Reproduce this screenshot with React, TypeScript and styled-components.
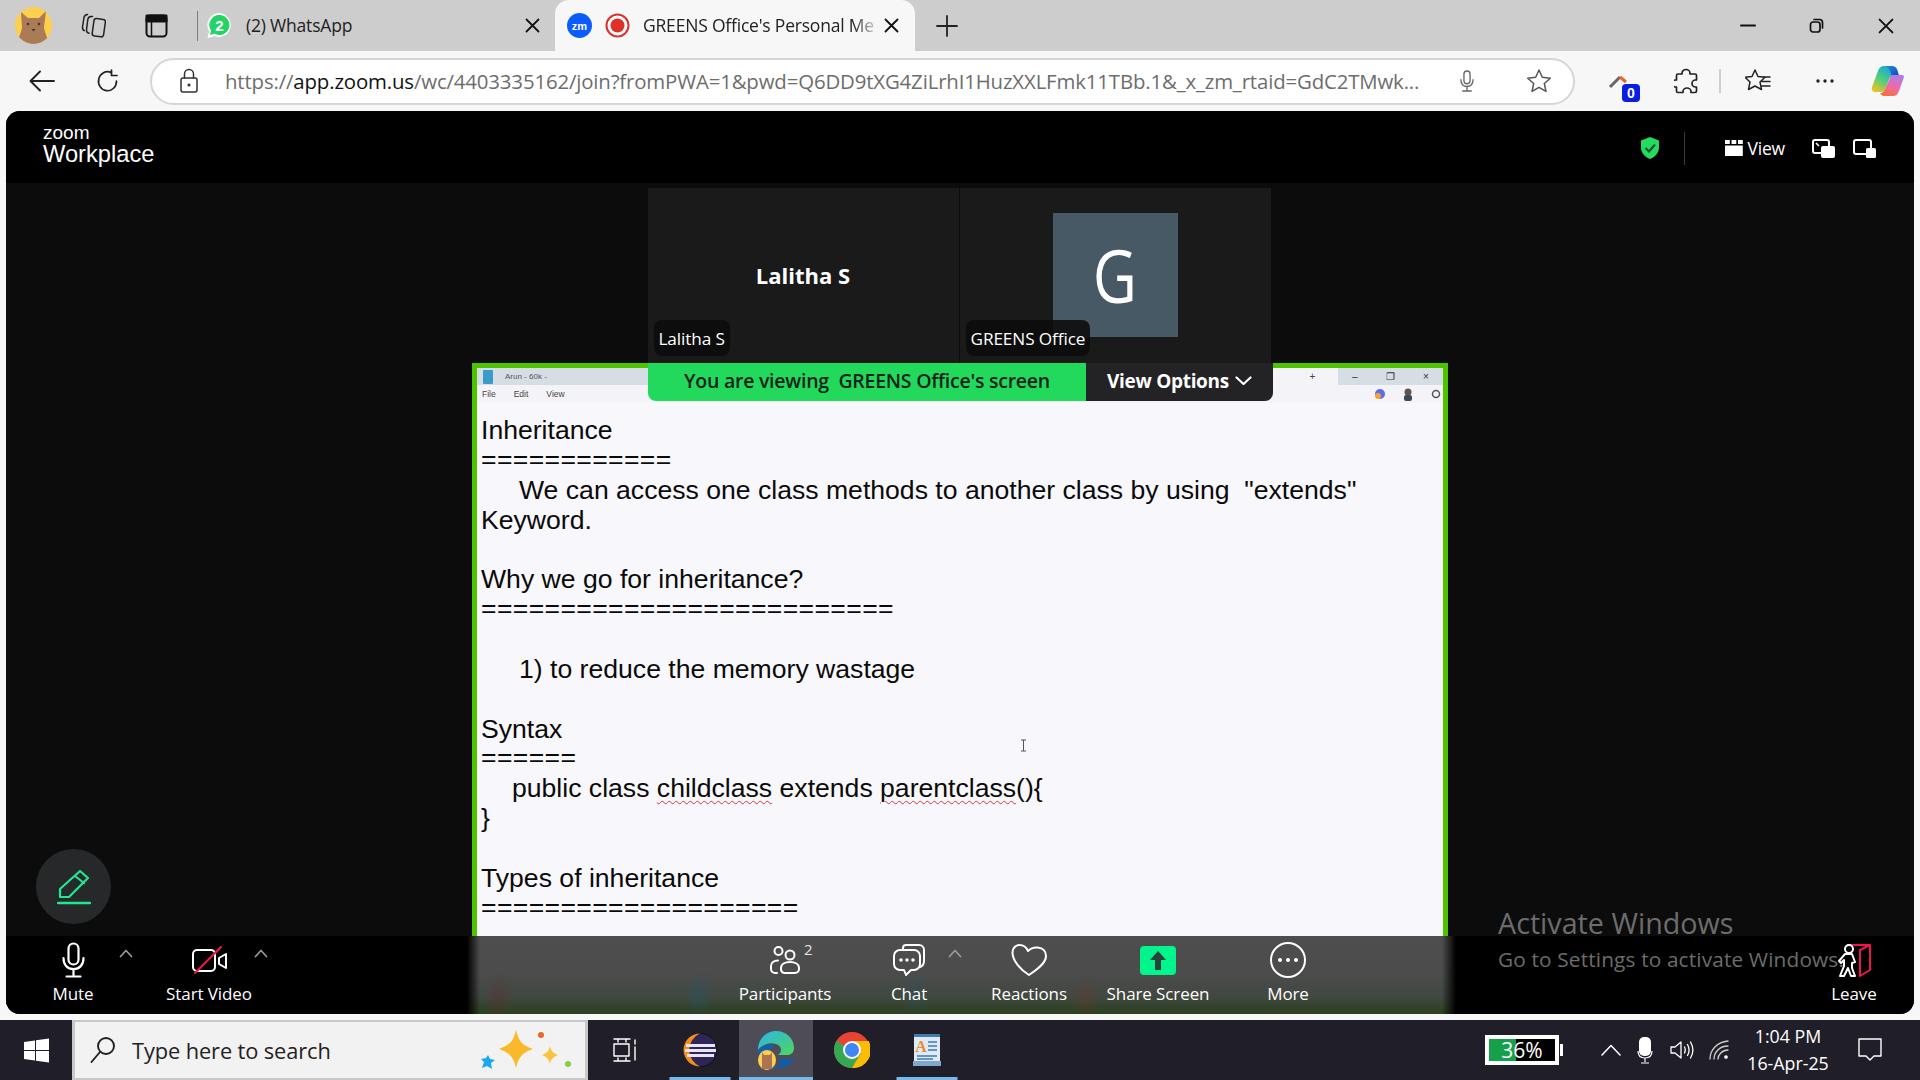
import React from 'react';
import styled, { createGlobalStyle } from 'styled-components';

const Global = createGlobalStyle`
  html, body { margin: 0; padding: 0; width: 1920px; height: 1080px; overflow: hidden; background: #f7f7f7; }
  * { box-sizing: border-box; }
`;
const UI = `"Open Sans", "Noto Sans", sans-serif`;

const Page = styled.div`display:flex;flex-direction:column;width:1920px;height:1080px;font-family:${UI};`;

/* ---------- browser chrome ---------- */
const TabBar = styled.div`display:flex;align-items:center;height:51px;background:#cdcdcd;padding-left:10px;flex:none;`;
const Slot = styled.div<{ $w: number; $ml?: number }>`
  flex:none;width:${p => p.$w}px;margin-left:${p => p.$ml ?? 0}px;display:flex;align-items:center;justify-content:center;
`;
const TabDivider = styled.div`width:1px;height:30px;background:#7d7d7d;margin-left:15px;flex:none;`;
const IdleTab = styled.div`display:flex;align-items:center;width:357px;height:51px;padding-left:8px;flex:none;`;
const TabTitle = styled.span<{ $w: number }>`
  width:${p => p.$w}px;font-size:17.5px;line-height:24px;padding-bottom:2px;color:#222;white-space:nowrap;overflow:hidden;flex:none;letter-spacing:-.2px;
`;
const ActiveTab = styled.div`
  display:flex;align-items:center;width:360px;height:51px;background:#f7f7f7;border-radius:14px 14px 0 0;padding-left:8px;flex:none;
`;
const FadeTitle = styled(TabTitle)`
  margin-left:4px;
  -webkit-mask-image:linear-gradient(90deg,#000 88%,transparent 100%);mask-image:linear-gradient(90deg,#000 88%,transparent 100%);
`;
const Grow = styled.div`flex:1;`;

const AddressRow = styled.div`display:flex;align-items:center;height:60px;background:#f7f7f7;padding-left:8px;flex:none;`;
const UrlBox = styled.div`
  display:flex;align-items:center;width:1425px;height:47px;margin-left:9px;background:#fff;border:2px solid #d6d6d6;border-radius:24px;flex:none;
`;
const Url = styled.div`width:1196px;font-size:20.4px;color:#6d6d6d;white-space:nowrap;flex:none;letter-spacing:-.15px;
  b{font-weight:400;color:#111;}
`;
const ToolSep = styled.div`width:2px;height:24px;background:#cfcfcf;margin:0 0 0 2px;flex:none;`;

/* ---------- zoom window ---------- */
const ZoomWindow = styled.div`
  position:relative;display:flex;flex-direction:column;width:1908px;height:903px;margin:0 6px;background:#0c0c0c;border-radius:14px;overflow:hidden;flex:none;color:#fff;
`;
const Header = styled.header`display:flex;align-items:center;height:72px;background:#000;padding:2px 0 0 37px;flex:none;`;
const Brand = styled.div`display:flex;flex-direction:column;line-height:1;`;
const BrandZoom = styled.span`font-size:19px;font-family:"Liberation Sans",sans-serif;margin-top:-5px;line-height:16px;`;
const BrandName = styled.span`font-size:23.7px;font-family:"Liberation Sans",sans-serif;margin-top:2px;`;
const HeaderSep = styled.div`width:1px;height:33px;background:#3a3a3a;margin-left:19px;flex:none;`;
const ViewLabel = styled.span`font-size:17.5px;font-weight:500;margin-left:3px;letter-spacing:-.2px;`;
const ShieldWrap = styled.div`margin-left:1481px;display:flex;width:30px;justify-content:center;flex:none;`;

const Stage = styled.main`position:relative;display:flex;flex-direction:column;align-items:center;flex:1;min-height:0;`;
const TileRow = styled.div`display:flex;gap:1px;height:180px;padding-top:5px;margin-right:2px;flex:none;`;
const Tile = styled.div`position:relative;display:flex;align-items:center;justify-content:center;width:311px;background:#1a1a1a;`;
const CenterName = styled.span`font-size:22px;font-weight:700;margin-top:-1px;`;
const Avatar = styled.div`
  display:flex;align-items:center;justify-content:center;width:125px;height:124px;background:#465964;margin-top:-1px;
`;
const AvatarLetter = styled.span`font-size:74px;line-height:1;font-family:"Open Sans",sans-serif;font-weight:500;transform:scaleX(.82);`;
const NameTag = styled.div`
  position:absolute;left:6px;bottom:7px;height:36px;padding:0 5px;display:flex;align-items:center;background:rgba(12,12,12,.9);border-radius:8px;font-size:17.2px;letter-spacing:-.1px;
`;

const ShareFrame = styled.section`
  position:relative;width:976px;flex:1;min-height:0;border:5px solid #4cc500;border-bottom:0;background:#f8f7fb;color:#000;overflow:hidden;
`;
const MiniTabs = styled.div`display:flex;align-items:center;height:17px;background:#d4dee4;font:8px "Liberation Sans",sans-serif;color:#555;padding-left:6px;`;
const MiniName = styled.span`margin-left:12px;`;
const MiniSpacer = styled.div`flex:1;`;
const MiniRight = styled.div`display:flex;align-items:center;justify-content:space-around;width:100px;height:17px;background:#f4f4f8;font-size:10px;color:#444;`;
const MiniControls = styled.div`display:flex;justify-content:space-around;width:105px;font-size:10px;color:#333;`;
const MiniMenu = styled.div`display:flex;align-items:center;gap:18px;height:18px;padding:0 2px 0 5px;background:#f4f4f8;font:8.5px "Liberation Sans",sans-serif;color:#444;`;
const MiniIcons = styled.div`display:flex;align-items:center;gap:18px;margin-left:auto;`;
const NoteBody = styled.div`padding:13px 0 0 4px;font:26.6px/29.87px "Liberation Sans",sans-serif;white-space:pre;color:#0a0a0a;`;
const NoteLine = styled.div<{ $indent?: number }>`height:29.87px;padding-left:${p => p.$indent ?? 0}px;`;
const RuleLine = styled(NoteLine)`letter-spacing:.35px;line-height:27.87px;`;
const Misspelt = styled.span`text-decoration:underline wavy #d9343c 1px;text-underline-offset:3px;`;
const Cursor = styled.div`position:absolute;left:543px;top:371px;line-height:0;`;

const Banner = styled.div`position:absolute;top:180px;left:642px;display:flex;height:38px;border-radius:0 0 8px 8px;overflow:hidden;`;
const BannerInfo = styled.div`
  display:flex;align-items:center;justify-content:center;width:438px;padding-bottom:3px;background:#22d95c;color:#15231c;font-size:19.5px;font-weight:600;white-space:pre;letter-spacing:-.25px;
`;
const BannerOptions = styled.div`
  display:flex;align-items:center;justify-content:center;gap:6px;width:187px;padding-bottom:3px;background:#232326;color:#fff;font-size:19px;font-weight:700;letter-spacing:-.3px;
`;

const PenButton = styled.div`
  position:absolute;left:30px;bottom:90px;width:75px;height:75px;border-radius:50%;background:#26282a;display:flex;align-items:center;justify-content:center;
`;
const Watermark = styled.div`position:absolute;left:1492px;top:794px;color:#6c6c6c;pointer-events:none;font-family:"Open Sans",sans-serif;`;
const WatermarkTitle = styled.div`font-size:28.7px;line-height:36px;`;
const WatermarkSub = styled.div`font-size:20.8px;line-height:30px;margin-top:3px;letter-spacing:.15px;`;

const ToolBar = styled.nav`
  display:flex;height:78px;flex:none;padding-left:24px;
  background:
    linear-gradient(90deg,#000 0,#000 461px,transparent 474px,transparent 1436px,#000 1450px),
    radial-gradient(ellipse 14px 24px at 493px 62px,rgba(110,30,40,.28),transparent),
    radial-gradient(ellipse 14px 24px at 693px 60px,rgba(20,90,120,.32),transparent),
    radial-gradient(ellipse 14px 24px at 910px 60px,rgba(20,90,120,.25),transparent),
    radial-gradient(ellipse 14px 24px at 1080px 62px,rgba(120,50,30,.28),transparent),
    linear-gradient(180deg,#4e4e4e 0,#4c4c4c 45%,#414841 78%,#2b3f1e 100%);
`;
const ToolItem = styled.div<{ $w: number; $ml?: number }>`
  display:flex;flex-direction:column;align-items:center;width:${p => p.$w}px;margin-left:${p => p.$ml ?? 0}px;flex:none;
`;
const ToolIcon = styled.div`position:relative;display:flex;align-items:center;justify-content:center;height:46px;width:100%;padding-top:2px;`;
const ToolLabel = styled.span`font-size:17px;line-height:24px;white-space:nowrap;color:#fff;letter-spacing:-.1px;`;
const Caret = styled.div<{ $ml?: number }>`width:16px;height:34px;margin-left:${p => p.$ml ?? 0}px;display:flex;align-items:center;justify-content:center;flex:none;`;
const CountSup = styled.span`position:absolute;left:69px;top:3px;font-size:15px;color:#e6e6e6;`;

/* ---------- taskbar ---------- */
const Strip = styled.div`height:6px;flex:none;`;
const Taskbar = styled.footer`display:flex;align-items:center;height:60px;background:#201f29;flex:none;color:#fff;`;
const StartButton = styled.div`width:72px;height:60px;display:flex;align-items:center;justify-content:center;flex:none;`;
const SearchBox = styled.div`
  display:flex;align-items:center;width:516px;height:60px;background:#f2f2f2;border:3px solid #c9c9c9;border-bottom-width:2px;border-top-width:2px;padding:0 13px 0 15px;flex:none;
`;
const SearchText = styled.span`font-size:21.8px;color:#222;margin-left:16px;flex:1;letter-spacing:-.1px;`;
const TaskButton = styled.div<{ $w: number; $active?: boolean; $bar?: number }>`
  position:relative;display:flex;align-items:center;justify-content:center;flex:none;width:${p => p.$w}px;height:60px;
  background:${p => (p.$active ? '#4e4c56' : 'transparent')};
  &::after{content:'';position:absolute;bottom:0;left:50%;height:3px;transform:translateX(-50%);width:${p => p.$bar ?? 0}px;background:#76b9ed;}
`;
const TaskSpacer = styled.div`flex:1;`;
const Battery = styled.div`
  position:relative;display:flex;align-items:center;justify-content:center;width:74px;height:30px;border:4px solid #fff;font-size:21px;flex:none;
  background:linear-gradient(90deg,#16a04a 0 41%,#000 41%);
  &::after{content:'';position:absolute;right:-8px;top:5px;width:3px;height:12px;background:#fff;}
`;
const Clock = styled.div`display:flex;flex-direction:column;align-items:center;width:90px;margin-left:8px;font-size:17.8px;line-height:27px;flex:none;`;

/* ---------- icons ---------- */
const Cat = ({ s = 37 }: { s?: number }) => (
  <svg width={s} height={s} viewBox="0 0 37 37">
    <defs><clipPath id="catClip"><circle cx="18.500" cy="18.500" r="18.500" /></clipPath></defs>
    <circle cx="18.500" cy="18.500" r="18.500" fill="#fcd04d" />
    <path clipPath="url(#catClip)" d="M6 5l7 6h11l7-7-2 16c0 4 3 9 5 17H2c2-8 5-13 5-17z" fill="#ab7a56" />
    <circle cx="13" cy="17" r="1.300" fill="#4a3526" /><circle cx="24" cy="17" r="1.300" fill="#4a3526" />
    <path d="M16.500 22h4l-2 2.500z" fill="#4a3526" />
  </svg>
);
const Stroke = ({ w, h = w, vb, sw = 2, c = 'currentColor', children }: any) => (
  <svg width={w} height={h} viewBox={vb} fill="none" stroke={c} strokeWidth={sw} strokeLinecap="round" strokeLinejoin="round">{children}</svg>
);
const Close = ({ c = '#111', s = 15 }: any) => <Stroke w={s} vb="0 0 15 15" sw={1.8} c={c}><path d="M1.5 1.5l12 12M13.5 1.5l-12 12" /></Stroke>;
const Up = ({ c = '#9a9a9a' }: any) => <Stroke w={14} h={9} vb="0 0 14 9" sw={1.7} c={c}><path d="M1.5 7.5L7 1.500l5.500 6" /></Stroke>;
const MicGlyph = ({ c = '#fff', w = 23, h = 36 }: any) => (
  <Stroke w={w} h={h} vb="0 0 23 36" sw={2.2} c={c}><rect x="6.500" y="1.500" width="10" height="21" rx="5" /><path d="M1.500 16c0 7 4 11 10 11s10-4 10-11M11.500 27v7M4.500 34.500h14" /></Stroke>
);

const App = () => (
  <Page>
    <Global />
    <TabBar>
      <Slot $w={46}><Cat /></Slot>
      <Slot $w={74}>
        <Stroke w={25} h={25} vb="0 0 25 25" sw={1.5} c="#222">
          <rect x="12" y="6" width="11.500" height="17.500" rx="2.500" transform="rotate(8 18 15)" />
          <path d="M11.500 3.500H10c-2 .2-3 1.500-3.200 3L5.500 17c0 1.800 1 3 2.500 3.300M6.500 1.500c-2 .2-3.200 1.500-3.500 3L1.500 14c-.2 1.800.5 3 1.800 3.600" />
        </Stroke>
      </Slot>
      <Slot $w={52}>
        <Stroke w={23} h={24} vb="0 0 23 24" sw={2} c="#111"><rect x="1.500" y="1.500" width="20" height="21" rx="3.500" /><rect x="1.500" y="1.500" width="20" height="6" fill="#111" /><path d="M6.500 7v15" strokeWidth={1.500} /></Stroke>
      </Slot>
      <TabDivider />
      <IdleTab>
        <Slot $w={26}>
          <svg width="25" height="25" viewBox="0 0 25 25"><path d="M12.500 0a12 12 0 0 0-10.300 18.200L.5 25l7-1.800A12 12 0 1 0 12.500 0z" fill="#fff" /><path d="M12.500 2a10 10 0 0 0-8.500 15.500L3 22l4.700-1.200A10 10 0 1 0 12.500 2z" fill="#25d366" /><text x="12.500" y="18" fontSize="15" fontWeight="700" fill="#fff" textAnchor="middle" fontFamily="Liberation Sans">2</text></svg>
        </Slot>
        <Slot $w={14} />
        <TabTitle $w={270}>(2) WhatsApp</TabTitle>
        <Slot $w={32}><Close /></Slot>
      </IdleTab>
      <ActiveTab>
        <Slot $w={32}>
          <svg width="25" height="25" viewBox="0 0 25 25"><circle cx="12.500" cy="12.500" r="12.500" fill="#0b5cff" /><text x="12.500" y="16.500" fontSize="11" fontWeight="700" fill="#fff" textAnchor="middle" fontFamily="Liberation Sans">zm</text></svg>
        </Slot>
        <Slot $w={44}>
          <svg width="25" height="25" viewBox="0 0 25 25"><circle cx="12.500" cy="12.500" r="11" fill="#fff" stroke="#d9322c" strokeWidth="2" /><circle cx="12.500" cy="12.500" r="7" fill="#e0302a" /></svg>
        </Slot>
        <FadeTitle $w={238}>GREENS Office's Personal Me</FadeTitle>
        <Slot $w={20}><Close /></Slot>
      </ActiveTab>
      <Slot $w={64}>
        <Stroke w={22} vb="0 0 22 22" sw={1.8} c="#222"><path d="M11 1v20M1 11h20" /></Stroke>
      </Slot>
      <Grow />
      <Slot $w={69}><Stroke w={16} h={3} vb="0 0 16 3" sw={2} c="#111"><path d="M1 1.500h14" /></Stroke></Slot>
      <Slot $w={69}><Stroke w={15} vb="0 0 15 15" sw={1.7} c="#111"><rect x="1.500" y="4" width="9.500" height="10" rx="2.500" /><path d="M5 1.500h5.500a3 3 0 0 1 3 3V10" /></Stroke></Slot>
      <Slot $w={69}><Close s={16} /></Slot>
    </TabBar>

    <AddressRow>
      <Slot $w={67}><Stroke w={26} h={22} vb="0 0 26 22" sw={1.9} c="#222"><path d="M25 11H2M11 1.500L1.500 11l9.500 9.500" /></Stroke></Slot>
      <Slot $w={66}><Stroke w={24} vb="0 0 24 24" sw={1.7} c="#222"><path d="M20.500 12A9 9.500 0 1 1 15 3.500M15.500 1v5.500H21" /></Stroke></Slot>
      <UrlBox>
        <Slot $w={73}><Stroke w={20} h={26} vb="0 0 20 26" sw={1.5} c="#333"><rect x="2" y="10" width="16" height="14" rx="2" /><path d="M5.500 10V6a4.500 4.500 0 0 1 9 0v4" /><circle cx="10" cy="17" r=".8" /></Stroke></Slot>
        <Url>https://<b>app.zoom.us</b>/wc/4403335162/join?fromPWA=1&amp;pwd=Q6DD9tXG4ZiLrhI1HuzXXLFmk11TBb.1&amp;_x_zm_rtaid=GdC2TMwk...</Url>
        <Slot $w={32} $ml={30}><MicGlyph c="#666" w={14} h={22} /></Slot>
        <Slot $w={44} $ml={34}><Stroke w={26} h={26} vb="0 0 26 26" sw={1.5} c="#555"><path d="M13 2l3.300 7.300 8 .9-6 5.300 1.700 7.900-7-4-7 4 1.700-7.900-6-5.300 8-.9z" /></Stroke></Slot>
      </UrlBox>
      <Slot $w={68} $ml={12}>
        <svg width="38" height="42" viewBox="0 0 38 42"><path d="M8 27L18 17" fill="none" stroke="#666" strokeWidth="3" /><path d="M18 17l6 5" stroke="#e8642c" strokeWidth="3" /><rect x="20" y="24" width="18" height="18" rx="4" fill="#0a1ee0" /><text x="29" y="38" fontSize="14" fontWeight="700" fill="#fff" textAnchor="middle" fontFamily="Liberation Sans">0</text></svg>
      </Slot>
      <Slot $w={62}><Stroke w={24} h={27} vb="0 0 24 27" sw={1.7} c="#222"><path d="M8 6V5a4 3.500 0 0 1 8 0v1h5a1.500 1.500 0 0 1 1.500 1.500V12h-1a3.500 3.500 0 0 0 0 7h1v4a1.500 1.500 0 0 1-1.500 1.500h-4v-1a4 3.500 0 0 0-8 0v1H4A1.500 1.500 0 0 1 2.500 23v-4h-1a3.500 3.500 0 0 1 0-7h1V7.500A1.500 1.500 0 0 1 4 6z" /></Stroke></Slot>
      <ToolSep />
      <Slot $w={74}><Stroke w={26} h={26} vb="0 0 26 26" sw={1.5} c="#222"><path d="M10 2l3 6.500 7 .8-5 4.700 1.500 7.500L10 18l-6.500 3.500L5 14 0 9.300l7-.8zM18 9h7M17 13.500h8M17 18h8" /></Stroke></Slot>
      <Slot $w={60}><svg width="20" height="4" viewBox="0 0 20 4" fill="#222"><circle cx="3" cy="2" r="1.700" /><circle cx="10" cy="2" r="1.700" /><circle cx="17" cy="2" r="1.700" /></svg></Slot>
      <Slot $w={65}>
        <svg width="33" height="30" viewBox="0 0 33 30">
          <defs>
            <linearGradient id="cpL" x1="0.700" y1="0" x2="0.200" y2="1"><stop offset="0" stopColor="#22a7d8" /><stop offset=".5" stopColor="#4fd07a" /><stop offset="1" stopColor="#f5c21f" /></linearGradient>
            <linearGradient id="cpR" x1="0.800" y1="0" x2="0.300" y2="1"><stop offset="0" stopColor="#a77ff0" /><stop offset=".55" stopColor="#ef6aa8" /><stop offset="1" stopColor="#f4713a" /></linearGradient>
            <linearGradient id="cpT" x1="0" y1="0" x2="1" y2="1"><stop offset="0" stopColor="#1f8ff0" /><stop offset="1" stopColor="#0c3aa8" /></linearGradient>
          </defs>
          <path d="M13 0h8c2.500 0 4.500 1.500 5.300 4l3 9.500h-9C19 8 17 1 13 0z" fill="url(#cpT)" />
          <path d="M13 0c-3 0-5.200 2-6 5L1 21c-1 3 .8 5 3.200 5H10c2.200 0 4-2 5-5l5.300-13C19 3.500 16.500 0 13 0z" fill="url(#cpL)" />
          <path d="M33 11c0-1.200-.8-2-2-2H20.300L15 21c-1 3-3 6-6 6.500 1 1.500 2.500 2.500 4 2.500h9c3 0 5-2 6-5z" fill="url(#cpR)" />
        </svg>
      </Slot>
    </AddressRow>

    <ZoomWindow>
      <Header>
        <Brand><BrandZoom>zoom</BrandZoom><BrandName>Workplace</BrandName></Brand>
        <ShieldWrap>
          <svg width="20" height="24" viewBox="0 0 20 24"><path d="M10 1l9 3.500v7c0 5.500-4 9.500-9 11.500C5 21 1 17 1 11.500v-7z" fill="#26d95f" /><path d="M5.500 12l3.500 3.500 6-7" fill="none" stroke="#053" strokeWidth="2" /></svg>
        </ShieldWrap>
        <HeaderSep />
        <Slot $w={20} $ml={39}>
          <svg width="18" height="16" viewBox="0 0 18 16" fill="#fff"><rect x="0" y="0" width="4.800" height="4" /><rect x="6.500" y="0" width="4.800" height="4" /><rect x="13" y="0" width="4.800" height="4" /><rect x="0" y="5.500" width="17.800" height="10.500" /></svg>
        </Slot>
        <ViewLabel>View</ViewLabel>
        <Slot $w={24} $ml={27}>
          <svg width="23" height="19" viewBox="0 0 23 19"><rect x="1" y="1" width="16" height="13" rx="2" fill="none" stroke="#fff" strokeWidth="2" /><rect x="9" y="7" width="14" height="12" rx="2" fill="#fff" /><path d="M4 4l3 3" stroke="#fff" strokeWidth="1.500" /></svg>
        </Slot>
        <Slot $w={24} $ml={17}>
          <svg width="23" height="19" viewBox="0 0 23 19"><rect x="1" y="1" width="17" height="14" rx="2" fill="none" stroke="#fff" strokeWidth="2" /><rect x="13" y="9" width="10" height="10" rx="1.500" fill="#fff" /></svg>
        </Slot>
      </Header>

      <Stage>
        <TileRow>
          <Tile><CenterName>Lalitha S</CenterName><NameTag>Lalitha S</NameTag></Tile>
          <Tile><Avatar><AvatarLetter>G</AvatarLetter></Avatar><NameTag>GREENS Office</NameTag></Tile>
        </TileRow>
        <ShareFrame>
          <MiniTabs>
            <svg width="10" height="14" viewBox="0 0 10 14"><rect width="10" height="14" rx="1" fill="#3b9ac9" /></svg>
            <MiniName>Arun - 60k -</MiniName>
            <MiniSpacer />
            <MiniRight><span>•</span><span>+</span></MiniRight>
            <MiniControls><span>–</span><span>❐</span><span>×</span></MiniControls>
          </MiniTabs>
          <MiniMenu>
            <span>File</span><span>Edit</span><span>View</span>
            <MiniIcons>
              <svg width="10" height="10" viewBox="0 0 10 10"><circle cx="5" cy="5" r="5" fill="#5a6cf0" /><circle cx="3" cy="7" r="3" fill="#f4a62a" /></svg>
              <svg width="10" height="13" viewBox="0 0 10 13"><circle cx="5" cy="4" r="3.500" fill="#6b5145" /><rect x="1" y="7" width="8" height="6" rx="2" fill="#3b4a5a" /></svg>
              <svg width="10" height="10" viewBox="0 0 10 10"><circle cx="5" cy="5" r="3.500" fill="none" stroke="#555" strokeWidth="1.500" /></svg>
            </MiniIcons>
          </MiniMenu>
          <NoteBody>
            <NoteLine>Inheritance</NoteLine>
            <RuleLine>============</RuleLine>
            <NoteLine $indent={38}>We can access one class methods to another class by using  "extends"</NoteLine>
            <NoteLine>Keyword.</NoteLine>
            <NoteLine />
            <NoteLine>Why we go for inheritance?</NoteLine>
            <RuleLine>==========================</RuleLine>
            <NoteLine />
            <NoteLine $indent={38}>1) to reduce the memory wastage</NoteLine>
            <NoteLine />
            <NoteLine>Syntax</NoteLine>
            <RuleLine>======</RuleLine>
            <NoteLine $indent={31}>public class <Misspelt>childclass</Misspelt> extends <Misspelt>parentclass</Misspelt>(){'{'}</NoteLine>
            <NoteLine>{'}'}</NoteLine>
            <NoteLine />
            <NoteLine>Types of inheritance</NoteLine>
            <RuleLine>====================</RuleLine>
          </NoteBody>
          <Cursor>
            <svg width="7" height="13" viewBox="0 0 7 13"><path d="M1 1h5M3.500 1v11M1 12h5" stroke="#555" strokeWidth="1" fill="none" /></svg>
          </Cursor>
        </ShareFrame>
        <Banner>
          <BannerInfo>You are viewing  GREENS Office's screen</BannerInfo>
          <BannerOptions>View Options
            <Stroke w={17} h={10} vb="0 0 17 10" sw={2.2} c="#fff"><path d="M1.500 1.500L8.500 8l7-6.500" /></Stroke>
          </BannerOptions>
        </Banner>
      </Stage>

      <ToolBar>
        <ToolItem $w={86}>
          <ToolIcon><MicGlyph /></ToolIcon>
          <ToolLabel>Mute</ToolLabel>
        </ToolItem>
        <Caret $ml={2}><Up /></Caret>
        <ToolItem $w={88} $ml={31}>
          <ToolIcon>
            <svg width="35" height="28" viewBox="0 0 35 28" fill="none" strokeLinecap="round" strokeLinejoin="round"><rect x="1" y="4" width="22" height="21" rx="4" stroke="#fff" strokeWidth="2" /><path d="M27 12l7-4v14l-7-4z" stroke="#fff" strokeWidth="2" /><path d="M3 27L29 1" stroke="#f0144f" strokeWidth="2.200" /></svg>
          </ToolIcon>
          <ToolLabel>Start Video</ToolLabel>
        </ToolItem>
        <Caret><Up /></Caret>
        <ToolItem $w={100} $ml={466}>
          <ToolIcon>
            <Stroke w={30} h={30} vb="0 0 30 30" sw={2} c="#fff"><circle cx="8.500" cy="6" r="4" /><circle cx="20" cy="10" r="4.500" /><path d="M7 28H5a4 4 0 0 1-4-4v-3c0-3.500 3-5.500 7-5.500M14 28h11a4 4 0 0 0 4-4v-1c0-4-4-6-9-6s-9 2-9 6v1a4 4 0 0 0 3 4z" /></Stroke>
            <CountSup>2</CountSup>
          </ToolIcon>
          <ToolLabel>Participants</ToolLabel>
        </ToolItem>
        <ToolItem $w={60} $ml={44}>
          <ToolIcon>
            <svg width="32" height="33" viewBox="0 0 32 33" fill="none" stroke="#fff" strokeWidth="2" strokeLinejoin="round" strokeLinecap="round"><path d="M10 5V4a3 3 0 0 1 3-3h13a5 5 0 0 1 5 5v11c0 3-1 5-4 6" /><path d="M7 6h14a6 6 0 0 1 6 6v8a6 6 0 0 1-6 6h-3l-5 5-2-5H7a6 6 0 0 1-6-6v-8a6 6 0 0 1 6-6z" /><circle cx="8" cy="16" r=".8" fill="#fff" /><circle cx="14" cy="16" r=".8" fill="#fff" /><circle cx="20" cy="16" r=".8" fill="#fff" /></svg>
          </ToolIcon>
          <ToolLabel>Chat</ToolLabel>
        </ToolItem>
        <Caret $ml={8}><Up /></Caret>
        <ToolItem $w={90} $ml={21}>
          <ToolIcon>
            <Stroke w={36} h={32} vb="0 0 36 32" sw={2} c="#fff"><path d="M1.500 8.500C1.500 4 5 1 8.500 1c4 0 7 2.500 8.500 6 3-3 6-4 10-3.500 5 .5 8 4 8 8.500 0 7-8 13-17 19C10 26 1.500 17 1.500 8.500z" /></Stroke>
          </ToolIcon>
          <ToolLabel>Reactions</ToolLabel>
        </ToolItem>
        <ToolItem $w={110} $ml={29}>
          <ToolIcon>
            <svg width="36" height="29" viewBox="0 0 36 29"><rect width="36" height="29" rx="4" fill="#00f58c" /><path d="M18 5l8 9h-5v10h-6V14h-5z" fill="#28413a" /></svg>
          </ToolIcon>
          <ToolLabel>Share Screen</ToolLabel>
        </ToolItem>
        <ToolItem $w={60} $ml={45}>
          <ToolIcon>
            <svg width="36" height="36" viewBox="0 0 36 36"><circle cx="18" cy="18" r="17" fill="none" stroke="#fff" strokeWidth="2" /><circle cx="10" cy="18" r="2" fill="#fff" /><circle cx="18" cy="18" r="2" fill="#fff" /><circle cx="26" cy="18" r="2" fill="#fff" /></svg>
          </ToolIcon>
          <ToolLabel>More</ToolLabel>
        </ToolItem>
        <ToolItem $w={60} $ml={506}>
          <ToolIcon>
            <svg width="36" height="36" viewBox="0 0 36 36" fill="none" strokeLinecap="round" strokeLinejoin="round"><path d="M12 3h22v25l-10 6V8l10-5" stroke="#f0144f" strokeWidth="2" /><circle cx="13" cy="7" r="4" fill="#000" stroke="#fff" strokeWidth="2" /><path d="M9 12h7l3 8 -3 1v5l3 8h-4l-3-8-4 8H4l4-10v-6l-3 3-2-2z" fill="#000" stroke="#fff" strokeWidth="2" /></svg>
          </ToolIcon>
          <ToolLabel>Leave</ToolLabel>
        </ToolItem>
      </ToolBar>

      <PenButton>
        <svg width="34" height="36" viewBox="0 0 34 36" fill="none" stroke="#1ee992" strokeWidth="2.200" strokeLinejoin="round" strokeLinecap="round"><path d="M23 2l8 7L12 28H3v-8zM18 7l9 7" /><path d="M1 34h32" strokeWidth="2.500" /></svg>
      </PenButton>
      <Watermark>
        <WatermarkTitle>Activate Windows</WatermarkTitle>
        <WatermarkSub>Go to Settings to activate Windows.</WatermarkSub>
      </Watermark>
    </ZoomWindow>

    <Strip />

    <Taskbar>
      <StartButton>
        <svg width="25" height="25" viewBox="0 0 25 25" fill="#fff"><path d="M0 4l11-1.500V12H0zM12 2.300L25 .5V12H12zM0 13h11v9.500L0 21zM12 13h13v11.500l-13-1.800z" /></svg>
      </StartButton>
      <SearchBox>
        <Stroke w={26} h={28} vb="0 0 26 28" sw={1.9} c="#222"><circle cx="16" cy="10" r="8" /><path d="M10 16L1.500 26" /></Stroke>
        <SearchText>Type here to search</SearchText>
        <svg width="92" height="44" viewBox="0 0 92 44"><path d="M36 2c2.500 11 6 15 17 19-11 4-14.500 8-17 19-2.500-11-6-15-17-19 11-4 14.500-8 17-19z" fill="#f9b92a" /><path d="M70 18c1 5 3 7 8 9-5 2-7 4-8 9-1-5-3-7-8-9 5-2 7-4 8-9z" fill="#f9c33c" /><path d="M8 27l2 4 5 1-4 3 1 6-5-3-5 2 2-6-3-3 5-1z" fill="#1aa8ee" /><circle cx="61" cy="7" r="3" fill="#e8672c" /><circle cx="88" cy="36" r="3" fill="#8fcf3c" /></svg>
      </SearchBox>
      <TaskButton $w={73}>
        <Stroke w={24} h={24} vb="0 0 24 24" sw={1.4} c="#fff"><path d="M1 1h16M5 1v3M13 1v3M1 23h16M5 20v3M13 20v3" /><rect x="1" y="6" width="15" height="12" /><path d="M22 2v4M22 9v13" /></Stroke>
      </TaskButton>
      <TaskButton $w={78} $bar={61}>
        <svg width="36" height="36" viewBox="0 0 36 36"><circle cx="18.500" cy="18" r="16.500" fill="#2e2658" stroke="#111" /><path d="M18 1.500A16.500 16.500 0 0 0 18 34.500 18 18 0 0 1 18 1.500z" fill="#f28c1c" /><rect x="4" y="12" width="29" height="3" fill="#e8e4f4" /><rect x="3" y="17" width="31" height="3" fill="#e8e4f4" /><rect x="5" y="22" width="27" height="3" fill="#e8e4f4" /></svg>
      </TaskButton>
      <TaskButton $w={74} $active $bar={74}>
        <svg width="38" height="40" viewBox="0 0 38 40"><defs><linearGradient id="edg" x1="0" y1="0" x2="1" y2="1"><stop offset="0" stopColor="#2ab5e8" /><stop offset="1" stopColor="#4fd65f" /></linearGradient></defs><path d="M1 20C1 8 10 1 19 1c11 0 18 8 18 17 0 3-2 7-6 7H20c5-1 6-9-1-11-6-2-13 0-18 6z" fill="url(#edg)" /><path d="M1 20c4-5 12-7 17-4-5 1-7 6-5 12 1 4 5 9 12 10C12 40 1 32 1 20z" fill="#1160b0" /><path d="M37 28c-3 7-10 11-17 10 5-2 5-6 0-9h13c2 0 3-1 4-1z" fill="#0f5ca8" /><ellipse cx="10" cy="30" rx="9" ry="10" fill="#fcd04d" /><path d="M5 22l2 3h6l2-3v12c0 2 0 4 1 5H4c1-1 1-3 1-5z" fill="#a9744f" /></svg>
      </TaskButton>
      <TaskButton $w={77}>
        <svg width="36" height="36" viewBox="0 0 36 36"><circle cx="18" cy="18" r="18" fill="#ea4335" /><path d="M18 18L2.500 9A18 18 0 0 0 18 36l9-15z" fill="#34a853" /><path d="M18 18l9-9h7.500A18 18 0 0 1 18 36l9-15z" fill="#fbbc05" /><path d="M18 9h16.500A18 18 0 0 1 36 18l-9 3z" fill="#fbbc05" /><circle cx="18" cy="18" r="9" fill="#fff" /><circle cx="18" cy="18" r="7" fill="#4285f4" /></svg>
      </TaskButton>
      <TaskButton $w={73} $bar={61}>
        <svg width="30" height="34" viewBox="0 0 30 34"><rect x="2" y="1" width="26" height="4" fill="#3e7cb4" /><rect x="2" y="4" width="26" height="28" fill="#dfeaf6" /><rect x="1" y="28" width="28" height="5" fill="#7fa8cc" /><text x="9" y="19" fontSize="16" fontWeight="700" fill="#ef8a2a" textAnchor="middle" fontFamily="Liberation Serif">A</text><path d="M16 9h9M16 13h9M16 17h9M5 23h20M5 26h16" stroke="#3e7cb4" strokeWidth="1.500" /></svg>
      </TaskButton>
      <TaskSpacer />
      <Battery>36%</Battery>
      <Slot $w={30} $ml={37}>
        <Stroke w={20} h={12} vb="0 0 20 12" sw={1.5} c="#fff"><path d="M1 11L10 1.500 19 11" /></Stroke>
      </Slot>
      <Slot $w={30} $ml={4}>
        <svg width="16" height="27" viewBox="0 0 16 27"><rect x="2" y="0" width="12" height="19" rx="5" fill="#fff" /><path d="M1 14c0 5 3 7 7 7s7-2 7-7M8 21v4M4 26h8" fill="none" stroke="#fff" strokeWidth="1.200" /></svg>
      </Slot>
      <Slot $w={30} $ml={7}>
        <Stroke w={24} h={20} vb="0 0 24 20" sw={1.3} c="#fff"><path d="M1 7h4l6-5v16l-6-5H1zM14.500 7c1 2 1 4 0 6M17.500 4.500c2 3.500 2 7.500 0 11M20.500 2c3 5 3 11 0 16" /></Stroke>
      </Slot>
      <Slot $w={30} $ml={8}>
        <Stroke w={22} h={20} vb="0 0 22 20" sw={1.3} c="#cfcfcf"><path d="M1 19C1 10 8 2 19 1M5 19c0-6 5-13 14-13M9 19c0-4 4-9 10-9" /><circle cx="17" cy="17" r="1.200" fill="#fff" stroke="#fff" /></Stroke>
      </Slot>
      <Clock><span>1:04 PM</span><span>16-Apr-25</span></Clock>
      <Slot $w={42} $ml={16}>
        <Stroke w={24} h={26} vb="0 0 24 26" sw={1.4} c="#fff"><path d="M1 2h22v17h-7l-4 4-4-4H1z" /></Stroke>
      </Slot>
      <Slot $w={29} />
    </Taskbar>
  </Page>
);

export default App;
